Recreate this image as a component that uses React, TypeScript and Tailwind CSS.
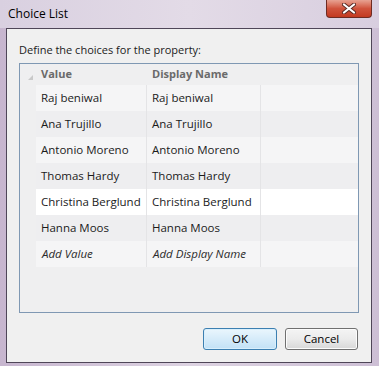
const rows = [
  { value: 'Raj beniwal', display: 'Raj beniwal', bg: 'bg-[#f5f5f6]' },
  { value: 'Ana Trujillo', display: 'Ana Trujillo', bg: 'bg-[#eeeef0]' },
  { value: 'Antonio Moreno', display: 'Antonio Moreno', bg: 'bg-[#f5f5f6]' },
  { value: 'Thomas Hardy', display: 'Thomas Hardy', bg: 'bg-[#eeeef0]' },
  { value: 'Christina Berglund', display: 'Christina Berglund', bg: 'bg-white' },
  { value: 'Hanna Moos', display: 'Hanna Moos', bg: 'bg-[#eeeef0]' },
];

export default function App() {
  return (
    <div
      className="w-[379px] h-[366px] flex flex-col bg-gradient-to-r from-[#c7b6cf] via-[#ddd3e2] to-[#cdbfd5] text-[11.5px] text-[#1b1b1b] overflow-hidden"
      style={{ fontFamily: '"Open Sans", "Noto Sans", sans-serif' }}
    >
      {/* Title bar */}
      <div className="h-[28px] flex items-start justify-between pl-[8px] pr-[7px] bg-gradient-to-r from-[#d9d0e0] via-[#e3dbe7] to-[#d8cedf]">
        <span className="mt-[5px] text-[12px] text-black">Choice List</span>
        <button className="w-[46px] h-[18px] flex items-center justify-center rounded-b-[4px] border border-t-0 border-[#6e2b22] bg-gradient-to-b from-[#e7a292] via-[#d0533c] to-[#c2391f]">
          <svg width="14" height="11" viewBox="0 0 14 11">
            <path d="M2 1.5 L12 9.5 M12 1.5 L2 9.5" stroke="#5a2a24" strokeWidth="4" strokeLinecap="round" />
            <path d="M2 1.5 L12 9.5 M12 1.5 L2 9.5" stroke="#ffffff" strokeWidth="2.2" strokeLinecap="round" />
          </svg>
        </button>
      </div>

      {/* Client area */}
      <div className="flex-1 ml-[6px] mr-[7px] mb-[3px] border border-[#4f4658] bg-[#f0f0f0] flex flex-col pl-[12px] pr-[12px]">
        <div className="mt-[12px] h-[17px] leading-[17px] text-[11px]">Define the choices for the property:</div>

        {/* Grid */}
        <div className="mt-[5px] h-[250px] border border-[#7f98b3] bg-[#efeff0] flex flex-col">
          <div className="h-[21px] flex items-center font-bold text-[#6a6a6a] shrink-0 text-[11px]">
            <div className="w-[16px] h-full relative">
              <svg className="absolute left-[8px] top-[11px]" width="5" height="5" viewBox="0 0 5 5">
                <path d="M5 0 L5 5 L0 5 Z" fill="#c9c9c9" />
              </svg>
            </div>
            <div className="w-[111px] pl-[5px]">Value</div>
            <div className="w-[114px] pl-[5px]">Display Name</div>
            <div className="flex-1 h-full" />
          </div>
          {rows.map((r) => (
            <div key={r.value} className={`h-[26px] flex items-center ml-[16px] ${r.bg}`}>
              <div className="w-[111px] h-full flex items-center pl-[5px] border-r border-[#e4e4e6] whitespace-nowrap">{r.value}</div>
              <div className="w-[114px] h-full flex items-center pl-[5px] border-r border-[#e4e4e6] whitespace-nowrap">{r.display}</div>
              <div className="flex-1 h-full" />
            </div>
          ))}
          <div className="h-[26px] flex items-center ml-[16px] bg-[#f5f5f6] italic text-[#2a2a2a]">
            <div className="w-[111px] h-full flex items-center pl-[6px] border-r border-[#e4e4e6] whitespace-nowrap">Add Value</div>
            <div className="w-[114px] h-full flex items-center pl-[6px] border-r border-[#e4e4e6] whitespace-nowrap">Add Display Name</div>
            <div className="flex-1 h-full" />
          </div>
        </div>

        {/* Buttons */}
        <div className="mt-[15px] flex justify-end gap-[8px] pr-[1px]">
          <button className="w-[74px] h-[22px] rounded-[3px] border border-[#3c7fb1] bg-gradient-to-b from-[#eaf6fd] to-[#c2e1f6] text-[11.5px] text-black shadow-[inset_0_0_0_1px_#d9effc]">
            OK
          </button>
          <button className="w-[73px] h-[22px] rounded-[3px] border border-[#707070] bg-gradient-to-b from-[#f4f4f4] via-[#ebebeb] to-[#d8d8d8] text-[11.5px] text-black shadow-[inset_0_0_0_1px_#fcfcfc]">
            Cancel
          </button>
        </div>
      </div>
    </div>
  );
}
